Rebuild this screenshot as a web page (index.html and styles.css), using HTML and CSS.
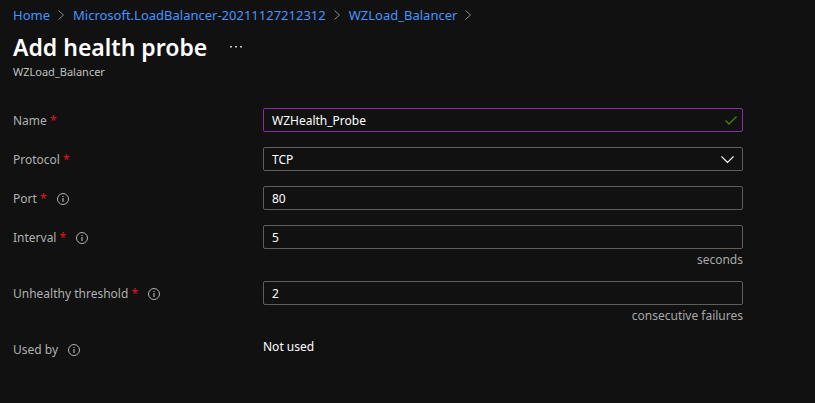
FILE: index.html
```html
<!DOCTYPE html>
<html lang="en">
<head>
<meta charset="utf-8">
<title>Add health probe</title>
<link rel="stylesheet" href="styles.css">
</head>
<body>
<svg class="defs" aria-hidden="true">
  <symbol id="info" viewBox="0 0 12 12"><circle cx="6" cy="6" r="5.5" fill="none" stroke="currentColor"/><path d="M5.4 3h1.2v1.1H5.4zM5.4 5h1.2v4H5.4z" fill="currentColor"/></symbol>
  <symbol id="sep" viewBox="0 0 7 10"><path d="M.5.5 5.5 5 .5 9.5" fill="none" stroke="currentColor"/></symbol>
</svg>
<nav class="breadcrumb" aria-label="Breadcrumb">
  <a href="#">Home</a><svg class="sep"><use href="#sep"/></svg>
  <a href="#">Microsoft.LoadBalancer-20211127212312</a><svg class="sep"><use href="#sep"/></svg>
  <a href="#">WZLoad_Balancer</a><svg class="sep"><use href="#sep"/></svg>
</nav>
<header class="heading">
  <div class="title-row">
    <h1>Add health probe</h1>
    <button class="more" type="button" aria-label="More actions"><svg viewBox="0 0 12 2"><path d="M0 0h2v1.5H0zM5 0h2v1.5H5zM10 0h2v1.5h-2z" fill="currentColor"/></svg></button>
  </div>
  <p class="subtitle">WZLoad_Balancer</p>
</header>
<form class="form">
  <div class="row">
    <div class="label"><label for="name">Name <span class="required">*</span></label></div>
    <div class="field">
      <input id="name" class="control valid" type="text" value="WZHealth_Probe">
      <svg class="check" viewBox="0 0 12 9"><path d="M.5 4.5 4 8 11.5.5" fill="none" stroke="currentColor" stroke-width="1.3"/></svg>
    </div>
  </div>
  <div class="row">
    <div class="label"><label for="protocol">Protocol <span class="required">*</span></label></div>
    <div class="field">
      <select id="protocol" class="control"><option>TCP</option><option>HTTP</option></select>
      <svg class="chevron" viewBox="0 0 13 8"><path d="M.5.5 6.5 6.5 12.5.5" fill="none" stroke="currentColor" stroke-width="1.2"/></svg>
    </div>
  </div>
  <div class="row">
    <div class="label"><label for="port">Port <span class="required">*</span></label><svg class="info"><use href="#info"/></svg></div>
    <div class="field"><input id="port" class="control" type="text" value="80"></div>
  </div>
  <div class="row">
    <div class="label"><label for="interval">Interval <span class="required">*</span></label><svg class="info"><use href="#info"/></svg></div>
    <div class="field"><input id="interval" class="control" type="text" value="5"><span class="unit">seconds</span></div>
  </div>
  <div class="row">
    <div class="label"><label for="threshold">Unhealthy threshold <span class="required">*</span></label><svg class="info"><use href="#info"/></svg></div>
    <div class="field"><input id="threshold" class="control" type="text" value="2"><span class="unit">consecutive failures</span></div>
  </div>
  <div class="row">
    <div class="label"><label for="used">Used by</label><svg class="info"><use href="#info"/></svg></div>
    <div class="field"><output id="used" class="value">Not used</output></div>
  </div>
</form>
</body>
</html>
```
FILE: styles.css
```css
* { box-sizing: border-box; }
body {
  margin: 0;
  padding: 6px 12px 0 13px;
  background: #111;
  color: #fff;
  font: 12px/18px "Noto Sans", "Open Sans", sans-serif;
}
h1, p { margin: 0; }
svg { flex: none; }
.defs { position: absolute; width: 0; height: 0; }
.breadcrumb { display: flex; align-items: center; font-size: 13px; }
.breadcrumb a { color: #4894fe; text-decoration: none; }
.sep { width: 7px; height: 10px; margin: 0 8px; color: #8a8a8a; }
.title-row { display: flex; align-items: center; gap: 21px; margin-top: 7px; }
h1 { font-size: 23px; line-height: 32px; font-weight: 600; }
.more { display: flex; padding: 2px; border: 0; background: none; color: #c8c6c4; }
.more svg { width: 12px; height: 2px; }
.subtitle { font-size: 11px; color: #c0c0c0; }
.form { display: grid; gap: 15px; margin-top: 27px; }
.row { display: grid; grid-template-columns: 250px minmax(0, 480px); align-items: start; }
.label { display: flex; align-items: center; gap: 10px; height: 24px; padding-top: 2px; color: #b0b0b0; }
.required { color: #e81123; }
.info { width: 12px; height: 12px; }
.field { position: relative; display: grid; }
.control {
  width: 100%;
  height: 24px;
  margin: 0;
  padding: 0 8px;
  border: 1px solid #605e5c;
  border-radius: 2px;
  outline: none;
  appearance: none;
  background: #111;
  color: #fff;
  font: inherit;
}
select.control { padding-top: 2px; }
.valid { border-color: #8a2da5; }
.check { position: absolute; top: 8px; right: 6px; width: 12px; height: 9px; color: #498205; }
.chevron { position: absolute; top: 9px; right: 9px; width: 13px; height: 8px; color: #fff; pointer-events: none; }
.unit { padding-top: 4px; line-height: 13px; text-align: right; color: #a8a8a8; }
.value { line-height: 20px; }
```
